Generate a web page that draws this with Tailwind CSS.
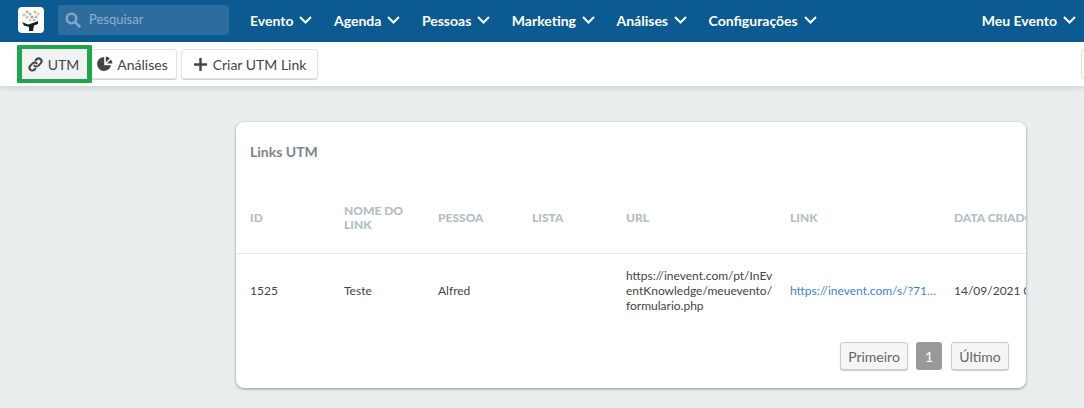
<!DOCTYPE html>
<html lang="pt">
  <head>
    <meta charset="UTF-8" />
    <title>Links UTM</title>
    <script src="https://cdn.jsdelivr.net/npm/@tailwindcss/browser@4"></script>
  </head>
  <body class="h-[408px] w-[1084px] overflow-hidden bg-[#ebeeef] font-['Lato',sans-serif]">
    <!-- top nav -->
    <nav class="flex h-[42px] items-center bg-[#0b5a92] pb-[2px] pl-[18px] text-white">
      <div class="flex h-[26px] w-[26px] items-center justify-center rounded-[4px] bg-white">
        <svg width="24" height="24" viewBox="0 0 24 24">
          <circle cx="8" cy="4" r="1.5" fill="#e79a86" />
          <circle cx="11" cy="6" r="1.5" fill="#8fc0b4" />
          <circle cx="16" cy="4" r="1.5" fill="#e3b56d" />
          <circle cx="19" cy="6" r="1.5" fill="#d9c6b0" />
          <circle cx="5" cy="7" r="1.5" fill="#a9c8c2" />
          <circle cx="8" cy="9" r="1.5" fill="#e2b39f" />
          <circle cx="13" cy="9" r="1.5" fill="#d98f7c" />
          <circle cx="17" cy="9" r="1.5" fill="#9cc3b9" />
          <circle cx="11" cy="12" r="1.3" fill="#dcc7a3" />
          <circle cx="15" cy="12" r="1.3" fill="#c9a58f" />
          <path d="M3 14 L9 16.5 L14 15 L19 13 L19 16 L15 17.5 L14 23 L10 23 L10 19 L5 17.5Z" fill="#10202c" />
        </svg>
      </div>
      <div class="ml-[14px] flex h-[30px] w-[171px] items-center rounded-[3px] border border-[#2b6fa3] bg-[#2f6c9e] pl-[6px]">
        <svg width="16" height="16" viewBox="0 0 16 16" fill="none" stroke="#7fa6c6" stroke-width="2.6">
          <circle cx="6.5" cy="6.5" r="4.7" />
          <path d="M10 10 L14.5 14.5" stroke-linecap="round" />
        </svg>
        <span class="ml-[8px] text-[13px] text-[#8fb1cd]">Pesquisar</span>
      </div>
      <div class="ml-[21px] flex items-center gap-[21.5px] text-[14px] font-bold">
        <a class="flex items-center gap-[6px]">Evento <svg width="13" height="8" viewBox="0 0 13 8" fill="none" stroke="white" stroke-width="2"><path d="M1 1 L6.5 6.5 L12 1" /></svg></a>
        <a class="flex items-center gap-[6px]">Agenda <svg width="13" height="8" viewBox="0 0 13 8" fill="none" stroke="white" stroke-width="2"><path d="M1 1 L6.5 6.5 L12 1" /></svg></a>
        <a class="flex items-center gap-[6px]">Pessoas <svg width="13" height="8" viewBox="0 0 13 8" fill="none" stroke="white" stroke-width="2"><path d="M1 1 L6.5 6.5 L12 1" /></svg></a>
        <a class="flex items-center gap-[6px]">Marketing <svg width="13" height="8" viewBox="0 0 13 8" fill="none" stroke="white" stroke-width="2"><path d="M1 1 L6.5 6.5 L12 1" /></svg></a>
        <a class="flex items-center gap-[6px]">Análises <svg width="13" height="8" viewBox="0 0 13 8" fill="none" stroke="white" stroke-width="2"><path d="M1 1 L6.5 6.5 L12 1" /></svg></a>
        <a class="flex items-center gap-[6px]">Configurações <svg width="13" height="8" viewBox="0 0 13 8" fill="none" stroke="white" stroke-width="2"><path d="M1 1 L6.5 6.5 L12 1" /></svg></a>
      </div>
      <a class="ml-auto mr-[8px] flex items-center gap-[6px] text-[14px] font-bold">Meu Evento <svg width="13" height="8" viewBox="0 0 13 8" fill="none" stroke="white" stroke-width="2"><path d="M1 1 L6.5 6.5 L12 1" /></svg></a>
    </nav>

    <!-- toolbar -->
    <div class="flex h-[44px] items-center gap-[4px] bg-white pl-[22px] text-[14px] text-[#444] shadow-[0_2px_6px_rgba(0,0,0,0.12)]">
      <button class="relative flex h-[30px] w-[65px] items-center justify-center gap-[5px] rounded-[3px] bg-[#f2f2f2] pr-[2px]">
        <svg width="15" height="15" viewBox="0 0 16 16" fill="none" stroke="#444" stroke-width="2.2" stroke-linecap="round">
          <path d="M6.8 9.2 a3 3 0 0 0 4.3 0 l2.4 -2.4 a3 3 0 0 0 -4.3 -4.3 l-1 1" />
          <path d="M9.2 6.8 a3 3 0 0 0 -4.3 0 l-2.4 2.4 a3 3 0 0 0 4.3 4.3 l1 -1" />
        </svg>
        UTM
        <span class="absolute -inset-x-[5px] -inset-y-[4px] rounded-[1px] border-x-[5px] border-y-[4px] border-[#1fa64a]"></span>
      </button>
      <button class="flex h-[30px] w-[86px] items-center justify-center gap-[4px] rounded-[3px] border border-[#e2e2e2] pr-[3px] shadow-[0_1px_1px_rgba(0,0,0,0.2)]">
        <svg width="16" height="16" viewBox="0 0 16 16" fill="#444">
          <path d="M7.2 1 A7 7 0 1 0 14 9.2 L7.2 9.2Z" />
          <path d="M8.8 0.5 A7 7 0 0 1 12.8 2.4 L8.8 6.6Z" />
          <path d="M13.8 3.4 A7 7 0 0 1 15.5 7.6 L9.8 7.6Z" />
        </svg>
        Análises
      </button>
      <button class="flex h-[30px] w-[137px] items-center justify-center gap-[6px] rounded-[3px] border border-[#e2e2e2] pl-[1px] shadow-[0_1px_1px_rgba(0,0,0,0.2)]">
        <svg width="13" height="13" viewBox="0 0 13 13" fill="none" stroke="#444" stroke-width="2.4"><path d="M6.5 0 V13 M0 6.5 H13" /></svg>
        Criar UTM Link
      </button>
      <span class="ml-auto h-[30px] w-[3px] rounded-l-[3px] border border-r-0 border-[#e2e2e2]"></span>
    </div>

    <!-- card -->
    <main class="pl-[236px] pt-[36px]">
      <section class="h-[266px] w-[790px] overflow-hidden rounded-[8px] bg-white shadow-[0_1px_3px_rgba(0,0,0,0.4)]">
        <h2 class="px-[14px] pt-[21px] text-[14px] leading-[18px] font-bold text-[#7d8487]">Links UTM</h2>
        <table class="mt-[19px] w-[820px] table-fixed border-collapse text-left">
          <colgroup>
            <col class="w-[94px]" /><col class="w-[94px]" /><col class="w-[94px]" /><col class="w-[94px]" /><col class="w-[164px]" /><col class="w-[164px]" /><col class="w-[116px]" />
          </colgroup>
          <thead>
            <tr class="h-[73px] border-b border-[#e3e6e8] text-[12px] leading-[14px] text-[#b3bec4]">
              <th class="px-[14px] pt-[4px] font-black">ID</th>
              <th class="px-[14px] pt-[4px] font-black">NOME DO LINK</th>
              <th class="px-[14px] pt-[4px] font-black">PESSOA</th>
              <th class="px-[14px] pt-[4px] font-black">LISTA</th>
              <th class="px-[14px] pt-[4px] font-black">URL</th>
              <th class="px-[14px] pt-[4px] font-black">LINK</th>
              <th class="pl-[14px] pt-[4px] font-black whitespace-nowrap">DATA CRIADO</th>
            </tr>
          </thead>
          <tbody>
            <tr class="h-[75px] text-[12px] leading-[15px] text-[#444]">
              <td class="px-[14px]">1525</td>
              <td class="px-[14px]">Teste</td>
              <td class="px-[14px]">Alfred</td>
              <td class="px-[14px]"></td>
              <td class="pl-[14px] whitespace-nowrap">https://inevent.com/pt/InEv<br />entKnowledge/meuevento/<br />formulario.php</td>
              <td class="pl-[14px] pr-[4px]"><a class="block truncate text-[#3d7fe0]">https://inevent.com/s/?71aaaaaaa</a></td>
              <td class="pl-[14px] whitespace-nowrap">14/09/2021 09:00</td>
            </tr>
          </tbody>
        </table>
        <div class="mr-[17px] mt-[14px] flex justify-end gap-[8px] text-[14px] text-[#666]">
          <button class="h-[28px] w-[68px] rounded-[3px] border border-[#ccc] bg-[#f5f5f5] shadow-[0_1px_1px_rgba(0,0,0,0.2)]">Primeiro</button>
          <button class="h-[28px] w-[26px] rounded-[3px] bg-[#999] text-white">1</button>
          <button class="ml-[1px] h-[28px] w-[58px] rounded-[3px] border border-[#ccc] bg-[#f5f5f5] shadow-[0_1px_1px_rgba(0,0,0,0.2)]">Último</button>
        </div>
      </section>
    </main>
  </body>
</html>
